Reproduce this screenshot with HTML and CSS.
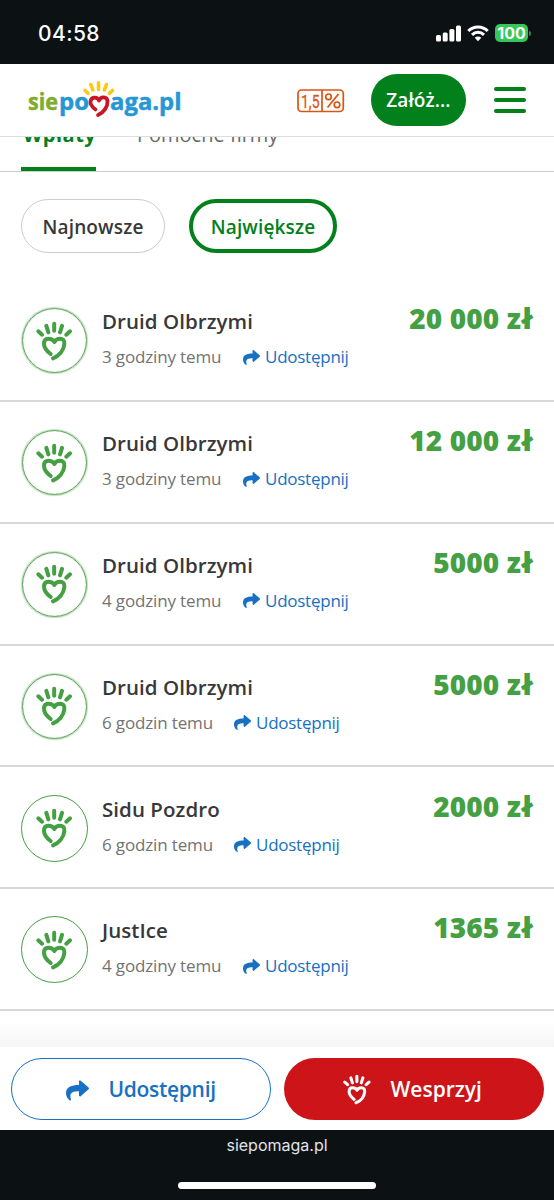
FILE: index.html
```html
<!DOCTYPE html>
<html lang="pl">
<head>
<meta charset="utf-8">
<title>siepomaga.pl</title>
<link rel="stylesheet" href="styles.css">
</head>
<body>
<svg class="defs" aria-hidden="true">
  <symbol id="hand" viewBox="80 75 110 120">
    <g fill="none" stroke="currentColor" stroke-linecap="round" stroke-linejoin="round" stroke-width="12">
      <path d="M134.500 83V104M111 89.500L117 109M158 89.500L152 109M87 106L98 116M182 106L171 116"/>
      <path d="M124 174C111 164 104 154 104 143C104 133 109 128 117 128C126 128 132 131 135 138C138 131 144 128 152 128C161 128 166 134 165 144C163 164 149 180 131 187"/>
    </g>
  </symbol>
  <symbol id="share" viewBox="0 0 512 512">
    <path fill="currentColor" d="M503 190L327 38C312 25 288 35 288 56V136C127 138 0 170 0 322c0 61 40 122 83 154 14 10 33-2 28-18C66 315 132 278 288 275v89c0 21 24 31 39 18l176-152c12-11 12-29 0-40z"/>
  </symbol>
</svg>
<div class="status">
  <span class="clock">04:58</span>
  <div class="indicators">
    <svg width="26" height="17" viewBox="0 0 26 17" fill="#fff"><rect x="0" y="10" width="5" height="6.500" rx="1.500"/><rect x="6.700" y="7.500" width="5" height="9" rx="1.500"/><rect x="13.400" y="4" width="5" height="12.500" rx="1.500"/><rect x="20" y="0.500" width="5" height="16" rx="1.500"/></svg>
    <svg class="wifi" width="22" height="17" viewBox="0 0 22 17" fill="none" stroke="#fff" stroke-width="3"><path d="M1.300 6C6.500.500 15.500.500 20.700 6M5 9.800C8.500 6.500 13.500 6.500 17 9.800"/><path d="M7.700 12.800Q11 10 14.300 12.800L11 16.200Z" fill="#fff" stroke="none"/></svg>
    <span class="battery">100</span><i class="cap"></i>
  </div>
</div>
<header class="header">
  <svg class="logo" width="156" height="40" viewBox="27 79 156 40">
    <g class="logo-text">
      <text x="28" y="110" textLength="30" lengthAdjust="spacingAndGlyphs" fill="#82ac2c" stroke="#82ac2c">sie</text>
      <text x="59" y="110" textLength="30" lengthAdjust="spacingAndGlyphs" fill="#2597d5" stroke="#2597d5">po</text>
      <text x="110" y="110" textLength="71.500" lengthAdjust="spacingAndGlyphs" fill="#2597d5" stroke="#2597d5">aga.pl</text>
    </g>
    <g fill="none" stroke-linecap="round" stroke-linejoin="round">
      <path stroke="#fcc814" stroke-width="3.600" d="M98.500 82.800V89.500M90.800 84.500L92.800 90M106.500 84.500L104.300 90M85 90.500L88 93.300M112.500 90.500L109.300 93.300"/>
      <path stroke="#cc1424" stroke-width="3.700" d="M95.500 109.500C91.500 106.500 90.300 103.500 90.500 101.500C91 97 97 96 99 100.500C101 96 107 96.500 107.500 101C107.800 106.500 104 112.500 98 115"/>
    </g>
  </svg>
  <svg class="tax" width="48" height="24" viewBox="0 0 48 24" fill="none" stroke="#dd5410" stroke-width="1.700">
    <rect x="1" y="1" width="45.300" height="21.500" rx="3.500"/><path d="M25 1V22.500"/>
    <g class="tax-text" fill="#dd5410"><text x="4" y="18.500" textLength="18.500" lengthAdjust="spacingAndGlyphs" stroke-width=".3">1,5</text></g>
    <path d="M41.500 5L30.500 18.500" stroke-width="1.800"/><circle cx="31.500" cy="7.800" r="2.800"/><circle cx="40" cy="15.800" r="2.800"/>
  </svg>
  <a class="create">Załóż...</a>
  <div class="menu"><i></i><i></i><i></i></div>
</header>
<nav class="tabs"><a class="tab active"><span>Wpłaty</span></a><a class="tab second"><span>Pomocne firmy</span></a></nav>
<div class="filters"><a class="pill newest">Najnowsze</a><a class="pill largest">Największe</a></div>
<main class="list">
  <article class="row"><div class="avatar soft"><svg><use href="#hand"/></svg></div><div class="info"><b>Druid Olbrzymi</b><p><span class="t1">3 godziny temu</span><a><svg><use href="#share"/></svg><span>Udostępnij</span></a></p></div><strong>20 000 zł</strong></article>
  <article class="row"><div class="avatar soft"><svg><use href="#hand"/></svg></div><div class="info"><b>Druid Olbrzymi</b><p><span class="t1">3 godziny temu</span><a><svg><use href="#share"/></svg><span>Udostępnij</span></a></p></div><strong>12 000 zł</strong></article>
  <article class="row"><div class="avatar soft"><svg><use href="#hand"/></svg></div><div class="info"><b>Druid Olbrzymi</b><p><span class="t1">4 godziny temu</span><a><svg><use href="#share"/></svg><span>Udostępnij</span></a></p></div><strong>5000 zł</strong></article>
  <article class="row"><div class="avatar soft"><svg><use href="#hand"/></svg></div><div class="info"><b>Druid Olbrzymi</b><p><span class="t2">6 godzin temu</span><a><svg><use href="#share"/></svg><span>Udostępnij</span></a></p></div><strong>5000 zł</strong></article>
  <article class="row"><div class="avatar"><svg><use href="#hand"/></svg></div><div class="info"><b>Sidu Pozdro</b><p><span class="t2">6 godzin temu</span><a><svg><use href="#share"/></svg><span>Udostępnij</span></a></p></div><strong>2000 zł</strong></article>
  <article class="row"><div class="avatar"><svg><use href="#hand"/></svg></div><div class="info"><b>JustIce</b><p><span class="t1">4 godziny temu</span><a><svg><use href="#share"/></svg><span>Udostępnij</span></a></p></div><strong>1365 zł</strong></article>
</main>
<div class="fade"></div>
<div class="actions">
  <a class="btn outline"><svg><use href="#share"/></svg><span>Udostępnij</span></a>
  <a class="btn red"><svg><use href="#hand"/></svg><span>Wesprzyj</span></a>
</div>
<footer class="browser"><span>siepomaga.pl</span><i></i></footer>
</body>
</html>
```
FILE: styles.css
```css
* { box-sizing: border-box; }
body { margin: 0; width: 554px; height: 1200px; overflow: hidden; background: #fff; color: #38383b; font-family: "Open Sans", sans-serif; display: flex; flex-direction: column; }
.defs { display: none; }
svg { display: block; flex: none; }
.status { height: 64px; flex: none; background: #0c1114; color: #fff; display: flex; justify-content: space-between; padding: 22px 23px 0 38px; font-family: Inter, sans-serif; }
.clock { font-size: 21px; line-height: 24px; font-weight: 500; letter-spacing: .4px; }
.indicators { display: flex; height: 22px; align-items: center; }
.indicators svg { margin-top: 1px; }
.wifi { margin-left: 5px; }
.battery { width: 33px; height: 18px; margin-left: 6px; border-radius: 5px; background: #35c759; font-size: 16px; line-height: 18px; font-weight: 700; text-align: center; }
.cap { width: 2px; height: 5px; margin-left: 1px; background: #2a8d43; border-radius: 0 2px 2px 0; }
.header { height: 73px; flex: none; border-bottom: 1px solid #ddd; display: flex; align-items: center; padding: 0 28px 0 27px; }
.logo { margin-top: -3px; }
.logo-text { font: 700 24px "Open Sans", sans-serif; stroke-width: .5px; stroke-linejoin: round; }
.tax { margin-left: 114px; margin-top: 1px; }
.tax-text { font: 400 18px Roboto, sans-serif; }
.create { width: 95px; height: 52px; margin-left: 26px; border-radius: 26px; background: #02801b; color: #fff; font-size: 19px; line-height: 53px; font-weight: 600; text-align: center; letter-spacing: .1px; }
.menu { width: 32px; margin-left: 28px; display: flex; flex-direction: column; gap: 7px; }
.menu i { height: 4px; border-radius: 2px; background: #02801b; }
.tabs { height: 34px; flex: none; overflow: hidden; display: flex; box-shadow: 0 1px #ccc; padding-left: 21px; font-size: 20px; line-height: 28px; }
.tab { height: 34px; color: #68686b; }
.tab span { display: block; margin-top: -16px; white-space: nowrap; }
.active { width: 75px; border-bottom: 4px solid #02801b; color: #02801b; font-weight: 700; padding-left: 2px; letter-spacing: .5px; }
.second { margin-left: 41px; }
.filters { height: 109px; flex: none; padding: 28px 21px; display: flex; gap: 24px; }
.pill { height: 54px; border-radius: 27px; text-align: center; font-size: 19px; font-weight: 600; line-height: 54px; border: 1px solid #ccc; letter-spacing: .15px; }
.newest { width: 144px; }
.largest { width: 148px; border: 4px solid #02801b; line-height: 48px; color: #02801b; }
.list { flex: none; }
.row { height: 121.850px; border-bottom: 2px solid #d8d8d8; display: flex; padding: 27.200px 21px 0; }
.avatar { width: 67px; height: 67px; flex: none; border: 1.500px solid #44a042; border-radius: 50%; color: #44a042; display: grid; place-items: center; }
.soft { width: 65px; height: 65px; margin: 1px 1px 0; border-color: #60a55d; box-shadow: 0 0 1px 1px #b9dcb6, inset 0 0 1px #81b87f; }
.avatar svg { width: 36.700px; height: 40px; }
.info { margin-left: 14px; flex: 1; }
.info b { display: block; font-size: 20.500px; line-height: 30px; margin-top: -1px; font-weight: 600; white-space: nowrap; letter-spacing: .05px; }
.info p { margin: 8px 0 0; display: flex; font-size: 17px; line-height: 26px; color: #737373; letter-spacing: -.15px; }
.info p > span { white-space: nowrap; }
.t1 { width: 141px; }
.t2 { width: 132px; }
.info a { display: flex; align-items: center; color: #1770c2; letter-spacing: -.25px; }
.info a svg { width: 17px; height: 17px; margin-right: 5px; }
.row strong { font-size: 28px; line-height: 34px; font-weight: 800; color: #44a042; white-space: nowrap; margin-top: -6px; letter-spacing: .15px; }
.fade { flex: 1; background: linear-gradient(#fff 30%, #f5f5f5); }
.actions { height: 83px; flex: none; display: flex; padding: 11px 10.500px 0; gap: 13px; font-size: 21px; font-weight: 600; }
.btn { width: 260px; height: 62px; border-radius: 31px; display: flex; align-items: center; }
.outline { border: 1.500px solid #1770c2; color: #1770c2; letter-spacing: -.3px; }
.outline svg { width: 23px; height: 23px; margin: 2px 20px 0 54px; }
.red { background: #cc1419; color: #fff; }
.red svg { width: 28px; height: 31px; margin: 0 20px 0 59px; }
.browser { height: 70px; flex: none; background: #0c1114; color: #e1e4e6; display: flex; flex-direction: column; align-items: center; font: 400 16px/20px Inter, sans-serif; padding-top: 5px; }
.browser i { width: 198px; height: 7px; background: #fff; border-radius: 4px; margin-top: 27px; }
```
